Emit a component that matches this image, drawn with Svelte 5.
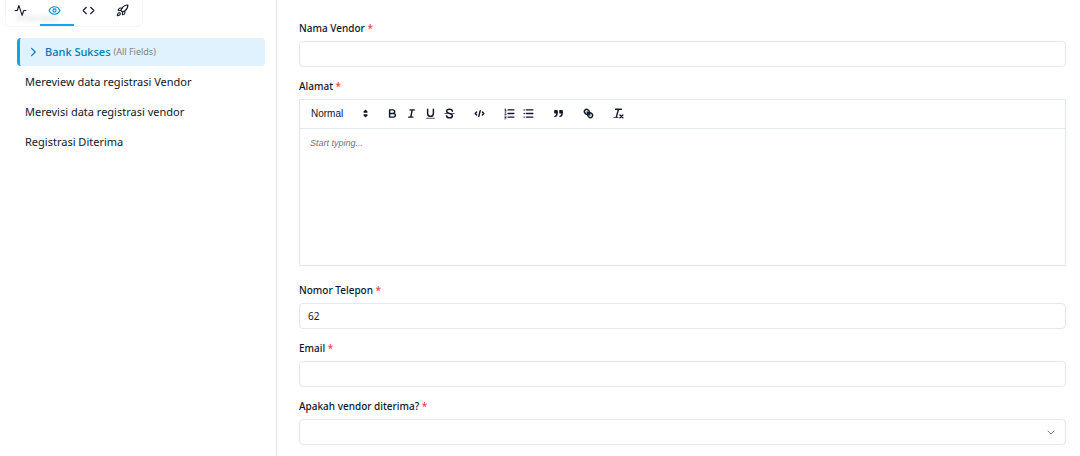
<script lang="ts">
  type Stage = { name: string; note?: string };

  const stages: Stage[] = [
    { name: "Bank Sukses", note: "(All Fields)" },
    { name: "Mereview data registrasi Vendor" },
    { name: "Merevisi data registrasi vendor" },
    { name: "Registrasi Diterima" },
  ];

  const tabs = ["Activity", "Preview", "Code", "Deploy"];

  let activeTab = $state("Preview");
  let activeStage = $state("Bank Sukses");
  let vendorName = $state("");
  let phone = $state("62");
  let email = $state("");
  let accepted = $state("");
</script>

{#snippet label(id: string, text: string)}
  <label for={id}>{text} <span class="required">*</span></label>
{/snippet}

<div class="layout">
  <aside class="sidebar">
    <nav class="tabs">
      {#each tabs as tab}
        <button class="tab" class:active={tab === activeTab} aria-label={tab} onclick={() => activeTab = tab}>
          <svg class="tab-icon" viewBox="0 0 24 24">
            {#if tab === "Activity"}
              <path d="M22 12h-4l-3 9L9 3l-3 9H2" />
            {:else if tab === "Preview"}
              <path d="M2 12s3.500-7 10-7 10 7 10 7-3.500 7-10 7-10-7-10-7z" />
              <circle cx="12" cy="12" r="3" />
            {:else if tab === "Code"}
              <path d="M16 18l6-6-6-6M8 6l-6 6 6 6" />
            {:else}
              <path d="M4.500 16.500c-1.500 1.260-2 5-2 5s3.740-.5 5-2c.71-.84.7-2.130-.09-2.910a2.180 2.180 0 0 0-2.910-.09z" />
              <path d="M12 15l-3-3a22 22 0 0 1 2-3.950A12.880 12.880 0 0 1 22 2c0 2.720-.78 7.500-6 11a22.350 22.350 0 0 1-4 2z" />
              <path d="M9 12H4s.55-3.030 2-4c1.620-1.080 5 0 5 0M12 15v5s3.030-.55 4-2c1.080-1.620 0-5 0-5" />
            {/if}
          </svg>
        </button>
      {/each}
    </nav>
    <h2 class="sidebar-title">Preview</h2>

    <ul class="stages">
      {#each stages as stage}
        <li>
          <button class="stage" class:active={stage.name === activeStage} onclick={() => activeStage = stage.name}>
            {#if stage.name === activeStage}
              <svg class="chevron" viewBox="0 0 10 10"><path d="M3 2l3 3-3 3" /></svg>
            {/if}
            <span>{stage.name}</span>
            {#if stage.note}
              <small>{stage.note}</small>
            {/if}
          </button>
        </li>
      {/each}
    </ul>
  </aside>

  <main class="form">
    <div class="field">
      {@render label("vendor-name", "Nama Vendor")}
      <input id="vendor-name" type="text" bind:value={vendorName} />
    </div>

    <div class="field field-editor">
      {@render label("address", "Alamat")}
      <div class="editor">
        <div class="toolbar">
          <div class="format">
            <select aria-label="Text style">
              <option>Normal</option>
              <option>Heading 1</option>
              <option>Heading 2</option>
            </select>
            <svg viewBox="0 0 18 18">
              <path class="solid outlined" d="M7 11L9 13 11 11zM7 7L9 5 11 7z" />
            </svg>
          </div>
          <div class="tools">
            <button aria-label="Bold">
              <svg viewBox="0 0 18 18">
                <path d="M5 4h4.500A2.500 2.500 0 0 1 12 6.500 2.500 2.500 0 0 1 9.500 9H5zM5 9h5.500A2.500 2.500 0 0 1 13 11.500 2.500 2.500 0 0 1 10.500 14H5z" />
              </svg>
            </button>
            <button aria-label="Italic">
              <svg viewBox="0 0 18 18"><path d="M7 4h6M5 14h6M8 14l2-10" /></svg>
            </button>
            <button aria-label="Underline">
              <svg viewBox="0 0 18 18">
                <path d="M5 3v6a4 4 0 0 0 8 0V3" />
                <rect class="solid" x="3" y="15" width="12" height="1" />
              </svg>
            </button>
            <button aria-label="Strike">
              <svg viewBox="0 0 18 18">
                <path class="thin" d="M2.500 9h13" />
                <path d="M13 6c0-2-2-3-4-3S5 4 5 6s2 2.500 4 3 4 1 4 3-2 3-4 3-4-1-4-3" />
              </svg>
            </button>
          </div>
          <div class="tools">
            <button aria-label="Code">
              <svg viewBox="0 0 18 18"><path d="M5 7L3 9l2 2M13 7l2 2-2 2M10 5L8 13" /></svg>
            </button>
          </div>
          <div class="tools">
            <button aria-label="Ordered list">
              <svg viewBox="0 0 18 18">
                <path d="M7 4h8M7 9h8M7 14h8" />
                <path class="thin" d="M2.500 5.500h2M3.500 5.500v-3l-1 .5M4.500 10.500h-2c0-1 1.800-1 1.800-2s-1-1.200-1.800-.5M2.500 14.500h1.500M2.500 12.500c2-.5 2.500 1.500 1 2 1.500.5 1 2.300-1 2" />
              </svg>
            </button>
            <button aria-label="Bullet list">
              <svg viewBox="0 0 18 18"><path d="M6 4h9M6 9h9M6 14h9M3 4h.1M3 9h.1M3 14h.1" /></svg>
            </button>
          </div>
          <div class="tools">
            <button aria-label="Quote">
              <svg viewBox="0 0 18 18">
                <rect class="solid outlined" x="4" y="5" width="3" height="3" />
                <rect class="solid outlined" x="11" y="5" width="3" height="3" />
                <path d="M7 8c0 4-1 5-3 5M14 8c0 4-1 5-3 5" />
              </svg>
            </button>
          </div>
          <div class="tools">
            <button aria-label="Link">
              <svg viewBox="0 0 18 18">
                <path d="M7 7l4 4" />
                <path d="M8.900 4.577a3.476 3.476 0 0 1 .36 4.679A3.476 3.476 0 0 1 4.577 8.900C3.185 7.500 2.035 6.400 4.217 4.217S7.500 3.185 8.900 4.577z" />
                <path d="M13.423 9.100a3.476 3.476 0 0 0-4.679-.36 3.476 3.476 0 0 0 .36 4.679c1.392 1.392 2.500 2.542 4.679.36s1.031-3.287-.36-4.679z" />
              </svg>
            </button>
          </div>
          <div class="tools">
            <button aria-label="Clear formatting">
              <svg viewBox="0 0 18 18">
                <path d="M5 3h8M6 14L9 3M11 11l4 4M15 11l-4 4" />
                <rect class="solid" x="2" y="14" width="7" height="1" />
              </svg>
            </button>
          </div>
        </div>
        <textarea id="address" placeholder="Start typing..."></textarea>
      </div>
    </div>

    <div class="field">
      {@render label("phone", "Nomor Telepon")}
      <input id="phone" type="tel" bind:value={phone} />
    </div>

    <div class="field">
      {@render label("email", "Email")}
      <input id="email" type="email" bind:value={email} />
    </div>

    <div class="field">
      {@render label("accepted", "Apakah vendor diterima?")}
      <div class="select-wrap">
        <select id="accepted" bind:value={accepted}>
          <option value=""></option>
          <option value="ya">Ya</option>
          <option value="tidak">Tidak</option>
        </select>
        <svg viewBox="0 0 10 10"><path d="M2 4l3 3 3-3" /></svg>
      </div>
    </div>
  </main>
</div>

<style>
  :global(body) {
    background: #fff;
    color: #0f172a;
    font-family: "Noto Sans", sans-serif;
    font-size: 10px;
  }

  .layout {
    display: flex;
    min-height: 100vh;
  }

  .sidebar {
    position: relative;
    box-sizing: border-box;
    flex: 0 0 277px;
    padding: 8px 11px 0 17px;
    border-right: 1px solid #e2e8f0;
  }

  .sidebar-title {
    margin: 0 0 10px;
    font-size: 11px;
    font-weight: 500;
    line-height: 20px;
  }

  .tabs {
    position: absolute;
    top: -4px;
    left: 5px;
    z-index: 1;
    display: flex;
    border: 1px solid #f4f6f8;
    border-radius: 6px;
    background: rgba(255, 255, 255, 0.85);
    backdrop-filter: blur(2px);
  }

  button {
    padding: 0;
    border: 0;
    background: none;
    color: inherit;
    font: inherit;
    cursor: pointer;
  }

  .tab {
    display: flex;
    align-items: center;
    justify-content: center;
    box-sizing: border-box;
    width: 34px;
    height: 29px;
    padding-right: 5px;
    border-bottom: 2px solid transparent;
  }

  .tab.active {
    border-color: #0ea5e9;
    color: #0284c7;
  }

  svg {
    fill: none;
    stroke: currentColor;
    stroke-linecap: round;
    stroke-linejoin: round;
  }

  .tab-icon {
    width: 13px;
    height: 13px;
    stroke-width: 2;
  }

  .stages {
    display: grid;
    gap: 2px;
    margin: 0;
    padding: 0;
    list-style: none;
  }

  .stage {
    display: flex;
    align-items: center;
    box-sizing: border-box;
    width: 100%;
    height: 28px;
    padding: 0 8px 1px;
    border-radius: 4px;
    font-size: 11px;
    text-align: left;
  }

  .stage.active {
    border-left: 3px solid #0ea5e9;
    background: #e0f2fe;
    color: #0279b5;
    font-weight: 500;
  }

  .stage small {
    margin-left: 3px;
    color: #808080;
    font-size: 9px;
    font-weight: 400;
  }

  .chevron {
    width: 12px;
    height: 12px;
    margin-right: 5px;
  }

  .form {
    flex: 1;
    min-width: 0;
    padding: 20px 14px 11px 22px;
  }

  .field {
    display: flex;
    flex-direction: column;
    gap: 5px;
    margin-bottom: 11px;
  }

  .field-editor {
    margin-bottom: 16px;
  }

  label {
    font-weight: 500;
    line-height: 16px;
  }

  .required {
    color: #ef4444;
  }

  input,
  .select-wrap select {
    box-sizing: border-box;
    width: 100%;
    height: 26px;
    padding: 0 8px;
    border: 1px solid #e2e8f0;
    border-radius: 4px;
    background: #fff;
    color: inherit;
    font: inherit;
    appearance: none;
  }

  .select-wrap {
    display: grid;
    align-items: center;
  }

  .select-wrap select,
  .select-wrap svg {
    grid-area: 1 / 1;
  }

  .select-wrap svg {
    justify-self: end;
    width: 10px;
    height: 10px;
    margin-right: 10px;
    color: #7c828d;
    pointer-events: none;
  }

  .editor {
    border: 1px solid #e2e8f0;
  }

  .toolbar {
    display: flex;
    align-items: center;
    gap: 11px;
    height: 27px;
    padding: 0 5px 1px;
    border-bottom: 1px solid #e2e8f0;
  }

  .toolbar svg {
    width: 13px;
    height: 13px;
    stroke-width: 2;
  }

  .toolbar .thin {
    stroke-width: 1;
  }

  .solid {
    fill: currentColor;
    stroke: none;
  }

  .outlined {
    stroke: currentColor;
  }

  .format {
    display: grid;
    align-items: center;
    width: 67px;
  }

  .format select,
  .format svg {
    grid-area: 1 / 1;
  }

  .format select {
    padding: 0 6px;
    border: 0;
    background: none;
    color: inherit;
    font: 10px "Liberation Sans", sans-serif;
    appearance: none;
  }

  .format svg {
    justify-self: end;
    pointer-events: none;
  }

  .tools {
    display: flex;
  }

  .tools button {
    display: flex;
    align-items: center;
    justify-content: center;
    width: 19px;
    height: 20px;
  }

  textarea {
    display: block;
    box-sizing: border-box;
    width: 100%;
    height: 136px;
    padding: 7px 10px;
    border: 0;
    background: none;
    color: inherit;
    font: 9px/14px "Liberation Sans", sans-serif;
    resize: none;
  }

  textarea::placeholder {
    color: #6f737c;
    font-style: italic;
  }
</style>
